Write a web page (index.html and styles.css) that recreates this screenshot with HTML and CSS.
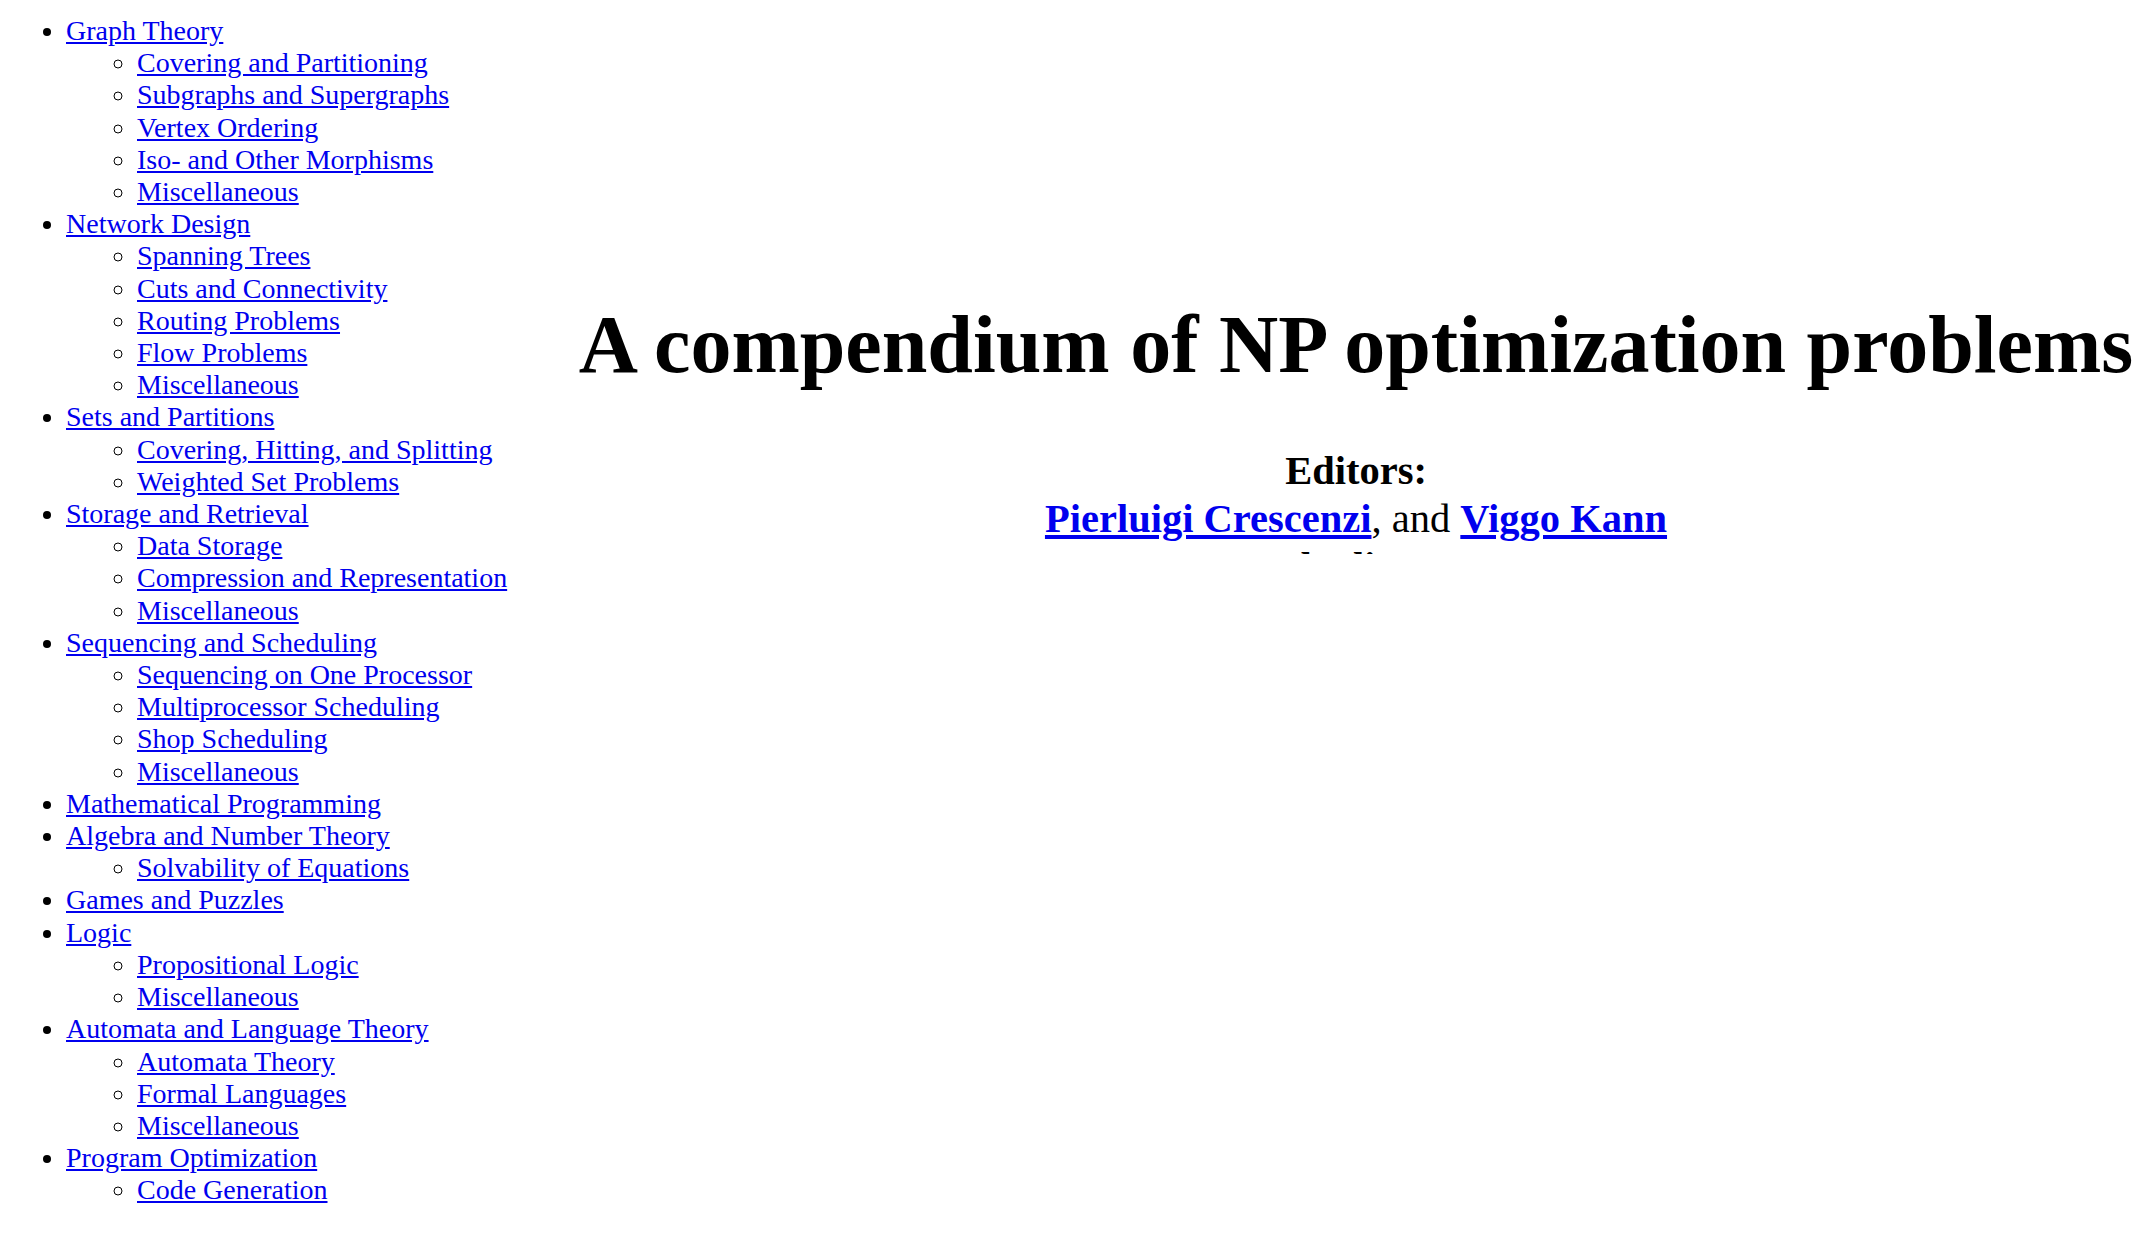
FILE: index.html
```html
<!DOCTYPE html>
<html>
<head>
<meta charset="utf-8">
<title>A compendium of NP optimization problems</title>
<link rel="stylesheet" href="styles.css">
</head>
<body>
<div class="frames">
  <nav class="toc">
    <ul class="top">
      <li><a href="#">Graph Theory</a>
        <ul>
          <li><a href="#">Covering and Partitioning</a></li>
          <li><a href="#">Subgraphs and Supergraphs</a></li>
          <li><a href="#">Vertex Ordering</a></li>
          <li><a href="#">Iso- and Other Morphisms</a></li>
          <li><a href="#">Miscellaneous</a></li>
        </ul>
      </li>
      <li><a href="#">Network Design</a>
        <ul>
          <li><a href="#">Spanning Trees</a></li>
          <li><a href="#">Cuts and Connectivity</a></li>
          <li><a href="#">Routing Problems</a></li>
          <li><a href="#">Flow Problems</a></li>
          <li><a href="#">Miscellaneous</a></li>
        </ul>
      </li>
      <li><a href="#">Sets and Partitions</a>
        <ul>
          <li><a href="#">Covering, Hitting, and Splitting</a></li>
          <li><a href="#">Weighted Set Problems</a></li>
        </ul>
      </li>
      <li><a href="#">Storage and Retrieval</a>
        <ul>
          <li><a href="#">Data Storage</a></li>
          <li><a href="#">Compression and Representation</a></li>
          <li><a href="#">Miscellaneous</a></li>
        </ul>
      </li>
      <li><a href="#">Sequencing and Scheduling</a>
        <ul>
          <li><a href="#">Sequencing on One Processor</a></li>
          <li><a href="#">Multiprocessor Scheduling</a></li>
          <li><a href="#">Shop Scheduling</a></li>
          <li><a href="#">Miscellaneous</a></li>
        </ul>
      </li>
      <li><a href="#">Mathematical Programming</a></li>
      <li><a href="#">Algebra and Number Theory</a>
        <ul>
          <li><a href="#">Solvability of Equations</a></li>
        </ul>
      </li>
      <li><a href="#">Games and Puzzles</a></li>
      <li><a href="#">Logic</a>
        <ul>
          <li><a href="#">Propositional Logic</a></li>
          <li><a href="#">Miscellaneous</a></li>
        </ul>
      </li>
      <li><a href="#">Automata and Language Theory</a>
        <ul>
          <li><a href="#">Automata Theory</a></li>
          <li><a href="#">Formal Languages</a></li>
          <li><a href="#">Miscellaneous</a></li>
        </ul>
      </li>
      <li><a href="#">Program Optimization</a>
        <ul>
          <li><a href="#">Code Generation</a></li>
        </ul>
      </li>
    </ul>
  </nav>
  <main class="title-frame">
    <h1 class="title">A compendium of NP optimization problems</h1>
    <div class="editors">
      <div class="label">Editors:</div>
      <div class="names"><a href="#" class="name">Pierluigi Crescenzi</a>, and <a href="#" class="name">Viggo Kann</a></div>
      <div class="label">Subeditors:</div>
    </div>
  </main>
</div>
</body>
</html>
```
FILE: styles.css
```css
html, body {
  margin: 0;
  padding: 0;
  background: #ffffff;
}

body {
  font-family: "Liberation Serif", "Times New Roman", serif;
  color: #000000;
}

a {
  color: #0000ee;
  text-decoration: underline;
}

.frames {
  display: flex;
  align-items: flex-start;
}

.toc {
  width: 557px;
  flex: 0 0 557px;
  font-size: 28px;
  line-height: 32.2px;
}

.toc ul {
  margin: 0;
  list-style-type: circle;
  padding-left: 71px;
}

.toc ul.top {
  list-style-type: disc;
  padding-left: 66px;
  margin-top: 15px;
}

.title-frame {
  flex: 1 1 auto;
  height: 554px;
  overflow: hidden;
  text-align: center;
}

.title {
  margin: 298px 0 0 0;
  font-size: 82px;
  line-height: 94px;
  font-weight: bold;
}

.editors {
  margin-top: 55px;
  font-size: 40.5px;
  line-height: 48px;
}

.label {
  font-weight: bold;
}

.name {
  font-weight: bold;
}
```
